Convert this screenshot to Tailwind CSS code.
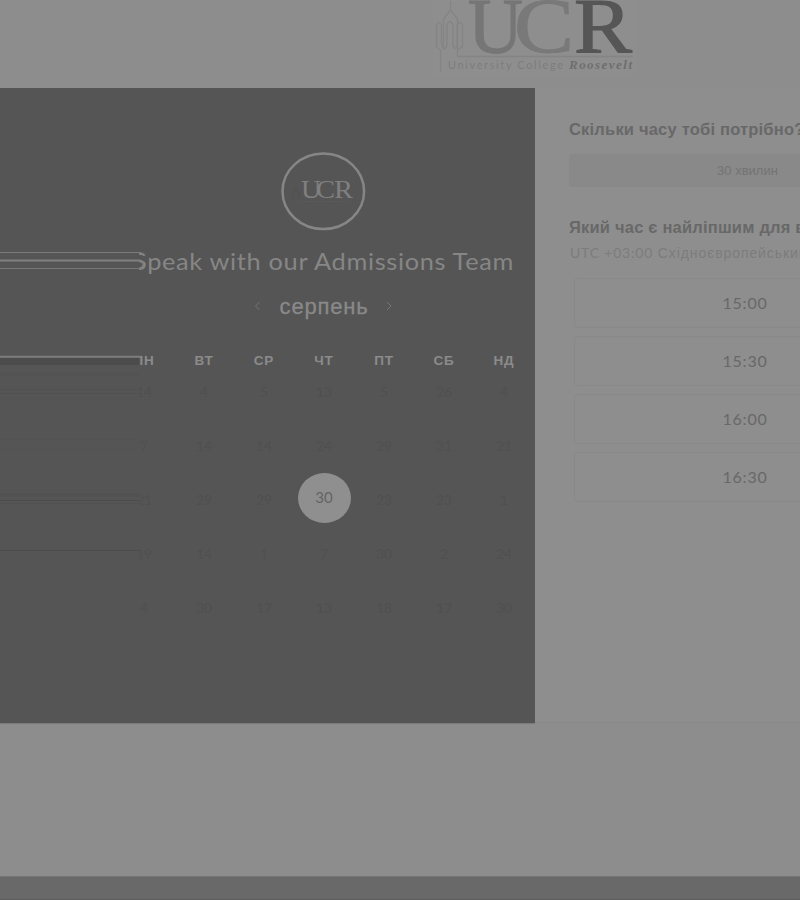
<!DOCTYPE html>
<html lang="uk">
<head>
<meta charset="utf-8">
<title>UCR Admissions</title>
<script src="https://cdn.jsdelivr.net/npm/@tailwindcss/browser@4"></script>
</head>
<body class="w-[800px] h-[900px] overflow-hidden bg-[#8d8d8d] font-['Liberation_Sans',sans-serif] flex flex-col">
<header class="h-[88px] shrink-0 pl-[430px]">
  <svg width="220" height="88" viewBox="430 0 220 88" class="block">
    <rect x="433" y="0" width="203" height="76" fill="#8e8e8e"/>
    <g fill="none" stroke="#848484" stroke-width="1.300">
      <path d="M450.500 1V10M450.500 10L443.500 19V47M450.500 10L457.500 19V56.500H633M440.500 72V50L436.500 47V25Q438.500 20 441.500 25V44Q444 53 447 45V25Q450 18 453 25V45Q455 51 457 46V25Q460 20 462.500 25V46L458 50"/>
    </g>
    <g font-family="Liberation Serif, serif" font-size="79">
      <text x="468" y="52" fill="#767676" stroke="#767676" stroke-width="1.200" textLength="55" lengthAdjust="spacingAndGlyphs">U</text>
      <text x="514" y="52" fill="#797979" stroke="#797979" stroke-width="1" textLength="60" lengthAdjust="spacingAndGlyphs">C</text>
      <text x="574" y="52" fill="#565656" stroke="#565656" stroke-width="1.200" textLength="58" lengthAdjust="spacingAndGlyphs">R</text>
    </g>
    <text x="448" y="69" font-family="Lato, sans-serif" font-size="11" fill="#7d7d7d" textLength="115">University College</text>
    <text x="569" y="69" font-family="Liberation Serif, serif" font-size="13" font-weight="bold" font-style="italic" fill="#6e6e6e" textLength="63">Roosevelt</text>
  </svg>
</header>
<main class="h-[635px] shrink-0 flex">
  <section class="w-[535px] bg-[#555555] flex shadow-[0_1px_1px_#7c7c7c]">
    <div class="w-[139px] shrink-0">
      <svg width="146" height="635" viewBox="0 88 146 635" class="block overflow-visible relative z-10" fill="none">
        <path d="M0 252.500H140Q143 252.500 144.500 254.500" stroke="#7b7b7b"/>
        <path d="M0 260.500H139Q143.500 261 143.500 264.500Q143 268 139 268.500" stroke="#808080" stroke-width="1.800"/>
        <path d="M0 268.500H140" stroke="#777777"/>
        <path d="M0 356.800H141" stroke="#7d7d7d" stroke-width="2"/>
        <path d="M0 361.500H139" stroke="#4c4c4c" stroke-width="7"/>
        <path d="M0 374H139" stroke="#535353" stroke-width="4"/>
        <path d="M0 389.500H139M0 393.500H139" stroke="#515151"/>
        <path d="M0 439.500H139M0 449.500H139" stroke="#535353"/>
        <path d="M0 495H139" stroke="#525252" stroke-width="4"/>
        <path d="M0 500.500H139M0 550.500H139" stroke="#4c4c4c"/>
        <path d="M0 503.500H139" stroke="#515151"/>
      </svg>
    </div>
    <div class="w-[396px] overflow-hidden flex flex-col">
      <svg width="396" height="150" viewBox="139 88 396 150" class="block shrink-0">
        <ellipse cx="323.300" cy="191.300" rx="40.800" ry="37.800" fill="none" stroke="#868686" stroke-width="2.500"/>
        <g font-family="Liberation Serif, serif" font-size="26" fill="#808080">
          <text x="301" y="198" textLength="20" lengthAdjust="spacingAndGlyphs">U</text>
          <text x="316" y="198" textLength="19" lengthAdjust="spacingAndGlyphs">C</text>
          <text x="334" y="198" textLength="19" lengthAdjust="spacingAndGlyphs">R</text>
        </g>
        <path d="M293 200V193L296 188L299 193V200" fill="none" stroke="#505050"/>
        <path d="M298 201.500H350" fill="none" stroke="#5a5a5a" stroke-dasharray="2 1"/>
      </svg>
      <svg width="396" height="48" viewBox="139 238 396 48" class="block shrink-0">
        <text x="133" y="269.500" font-family="Lato, sans-serif" font-size="23" letter-spacing="0.6" fill="#868686" textLength="381" lengthAdjust="spacingAndGlyphs">Speak with our Admissions Team</text>
      </svg>
      <div class="h-[64px] shrink-0 flex items-start">
        <svg width="9" height="14" viewBox="0 0 9 14" class="ml-[114px] mt-[13px]" fill="none" stroke="#757575"><path d="M6.500 3L2.500 7L6.500 11"/></svg>
        <h2 class="w-[124px] text-center text-[22px] leading-[41px] text-[#898989] tracking-[0.8px]" style="-webkit-text-stroke:.3px #898989">серпень</h2>
        <svg width="9" height="14" viewBox="0 0 9 14" class="mt-[13px]" fill="none" stroke="#757575"><path d="M1 3L5 7L1 11"/></svg>
      </div>
      <div class="-ml-[25px] w-[420px] grid grid-cols-7 text-center">
        <div class="col-span-7 grid grid-cols-7 h-[15px] mt-[3px] text-[13.500px] leading-[15px] font-bold text-[#8b8b8b] tracking-[0.8px]">
          <span>ПН</span><span>ВТ</span><span>СР</span><span>ЧТ</span><span>ПТ</span><span>СБ</span><span>НД</span>
        </div>
        <div class="col-span-7 grid grid-cols-7 auto-rows-[54px] leading-[57px] -mt-[5px] text-[14px] text-[#505050] font-['Lato',sans-serif]">
          <span>14</span><span>4</span><span>5</span><span>13</span><span>5</span><span>26</span><span>4</span>
          <span>7</span><span>14</span><span>14</span><span>24</span><span>29</span><span>31</span><span>21</span>
          <span>21</span><span>29</span><span>29</span><span class="h-[54px] flex justify-center items-center"><b class="w-[53px] h-[50px] shrink-0 rounded-[50%] bg-[#8f8f8f] text-[#646464] text-[15px] leading-[49px] font-normal">30</b></span><span>23</span><span>23</span><span>1</span>
          <span>19</span><span>14</span><span>1</span><span>7</span><span>30</span><span>2</span><span>24</span>
          <span>4</span><span>30</span><span>17</span><span>13</span><span>18</span><span>17</span><span>30</span>
        </div>
      </div>
    </div>
  </section>
  <section class="w-[265px] bg-[#8e8e8e] border-b border-[#888888] overflow-hidden pl-[34px] pt-[31px] whitespace-nowrap">
    <h3 class="text-[16.500px] leading-[20px] font-bold text-[#686868] tracking-[0.2px]">Скільки часу тобі потрібно?</h3>
    <div class="mt-[15px] w-[357px] h-[33px] rounded-[3px] bg-[#898989] text-center leading-[33px] text-[13px] text-[#737373]">30 хвилин</div>
    <h3 class="mt-[30px] text-[16.500px] leading-[20px] font-bold text-[#686868] tracking-[0.2px]">Який час є найліпшим для вас?</h3>
    <p class="mt-[7px] ml-px text-[14px] leading-[18px] text-[#7c7c7c] tracking-[0.8px]"><span class="font-['Lato',sans-serif]">UTC +03:00</span> <span class="tracking-[0.9px]">Східноєвропейський час</span></p>
    <div class="mt-[16px] ml-[5px] flex flex-col gap-[8px] w-[342px] text-center text-[16px] leading-[47px] text-[#686868] font-['Lato',sans-serif] tracking-[0.8px]">
      <div class="h-[50px] border border-[#898989] rounded-[3px]">15:00</div>
      <div class="h-[50px] border border-[#898989] rounded-[3px]">15:30</div>
      <div class="h-[50px] border border-[#898989] rounded-[3px]">16:00</div>
      <div class="h-[50px] border border-[#898989] rounded-[3px]">16:30</div>
    </div>
  </section>
</main>
<footer class="mt-auto h-[24px] shrink-0 bg-[#696969] border-t border-[#747474] border-b border-b-[#5d5d5d]"></footer>
</body>
</html>
